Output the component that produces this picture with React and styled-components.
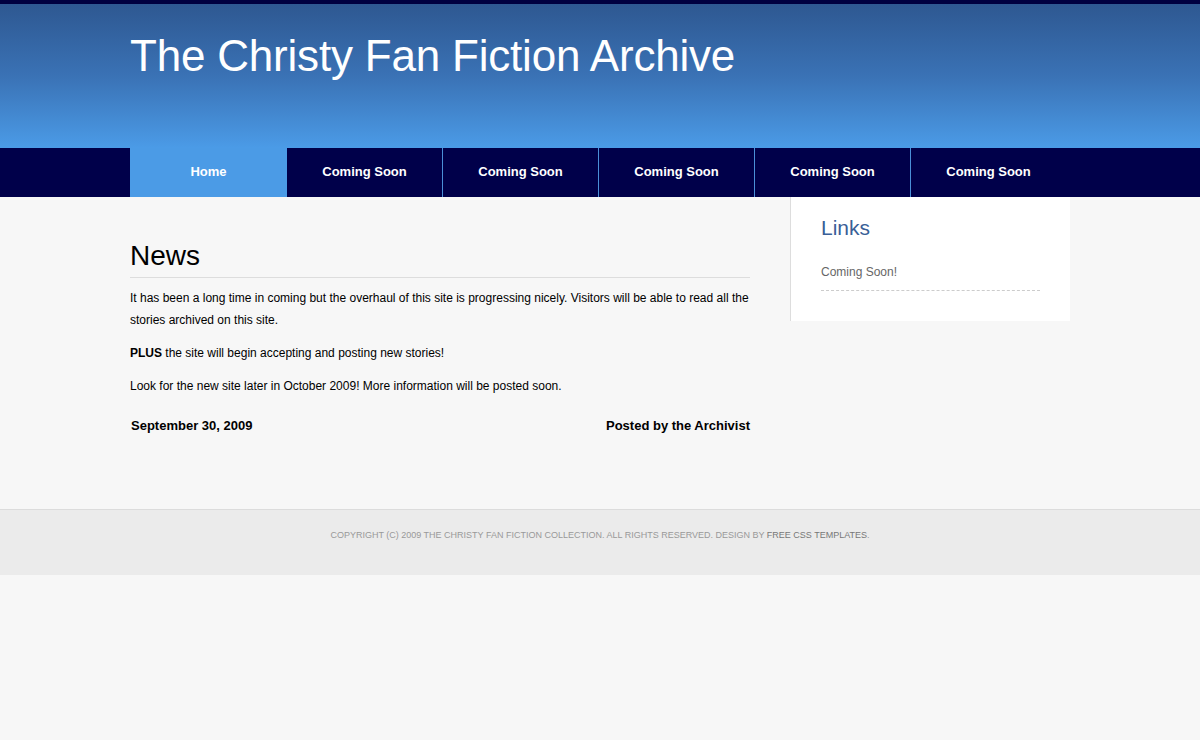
import React from "react";
import styled, { createGlobalStyle } from "styled-components";

const GlobalStyle = createGlobalStyle`
  html, body {
    margin: 0;
    padding: 0;
    background: #f7f7f7;
    font-family: "Liberation Sans", Arial, sans-serif;
  }
`;

const Header = styled.div`
  border-top: 4px solid #000040;
  height: 144px;
  background: linear-gradient(#2e5891 0%, #3a72b5 50%, #4b9be7 100%);
`;

const Wrap = styled.div`
  width: 940px;
  margin: 0 auto;
`;

const Logo = styled.h1`
  margin: 0;
  padding-top: 26px;
  font-size: 44px;
  font-weight: normal;
  color: #fff;
  line-height: 52px;
  letter-spacing: -0.2px;
`;

const Menu = styled.div`
  background: #00004a;
  height: 49px;
`;

const MenuList = styled.ul`
  display: flex;
  list-style: none;
  margin: 0 auto;
  padding: 0;
  width: 940px;
  height: 49px;
`;

const MenuItem = styled.li`
  width: ${(p) => (p.first ? "157px" : "155px")};
  border-right: ${(p) => (p.first || p.last ? "none" : "1px solid #4a8fd8")};
  background: ${(p) => (p.active ? "#4b9be6" : "transparent")};
  display: flex;
  align-items: center;
  justify-content: center;
  padding-bottom: 2px;
  box-sizing: content-box;
  color: #fff;
  font-size: 13px;
  font-weight: bold;
`;

const Page = styled.div`
  width: 940px;
  margin: 0 auto;
  display: flex;
  justify-content: space-between;
  align-items: flex-start;
  min-height: 312px;
`;

const Content = styled.div`
  width: 620px;
  padding-top: 41px;
`;

const PostTitle = styled.h2`
  margin: 0 0 9px;
  padding-bottom: 3px;
  border-bottom: 1px solid #dddddd;
  font-size: 28px;
  font-weight: normal;
  color: #000;
  line-height: 36px;
`;

const Text = styled.p`
  margin: 0 0 11px;
  font-size: 12px;
  line-height: 22px;
  color: #000;
`;

const Meta = styled.div`
  display: flex;
  justify-content: space-between;
  margin-top: 21px;
  padding-left: 1px;
  font-size: 13px;
  font-weight: bold;
  color: #000;
`;

const Sidebar = styled.div`
  width: 219px;
  background: #fff;
  border-left: 1px solid #dddddd;
  padding: 17px 30px 30px;
`;

const SideTitle = styled.h3`
  margin: 0 0 22px;
  font-size: 21px;
  font-weight: normal;
  color: #3a5f97;
  line-height: 28px;
`;

const SideLink = styled.div`
  font-size: 12px;
  color: #666;
  line-height: 16px;
  padding-bottom: 10px;
  border-bottom: 1px dashed #cccccc;
`;

const Footer = styled.div`
  background: #ebebeb;
  border-top: 1px solid #dcdcdc;
  height: 66px;
  display: flex;
  justify-content: center;
  padding-top: 20px;
  box-sizing: border-box;
  font-size: 9px;
  color: #999;
  text-transform: uppercase;
`;

const FooterLink = styled.span`
  color: #777;
`;

const items = ["Home", "Coming Soon", "Coming Soon", "Coming Soon", "Coming Soon", "Coming Soon"];

export default function App() {
  return (
    <>
      <GlobalStyle />
      <Header>
        <Wrap>
          <Logo>The Christy Fan Fiction Archive</Logo>
        </Wrap>
      </Header>
      <Menu>
        <MenuList>
          {items.map((item, i) => (
            <MenuItem key={i} first={i === 0} last={i === items.length - 1} active={i === 0}>
              {item}
            </MenuItem>
          ))}
        </MenuList>
      </Menu>
      <Page>
        <Content>
          <PostTitle>News</PostTitle>
          <Text>
            It has been a long time in coming but the overhaul of this site is progressing nicely. Visitors will be able to read all the stories archived on this site.
          </Text>
          <Text>
            <b>PLUS</b> the site will begin accepting and posting new stories!
          </Text>
          <Text>Look for the new site later in October 2009! More information will be posted soon.</Text>
          <Meta>
            <span>September 30, 2009</span>
            <span>Posted by the Archivist</span>
          </Meta>
        </Content>
        <Sidebar>
          <SideTitle>Links</SideTitle>
          <SideLink>Coming Soon!</SideLink>
        </Sidebar>
      </Page>
      <Footer>
        <span>
          Copyright (c) 2009 The Christy Fan Fiction Collection. All rights reserved. Design by <FooterLink>Free CSS Templates</FooterLink>.
        </span>
      </Footer>
    </>
  );
}
